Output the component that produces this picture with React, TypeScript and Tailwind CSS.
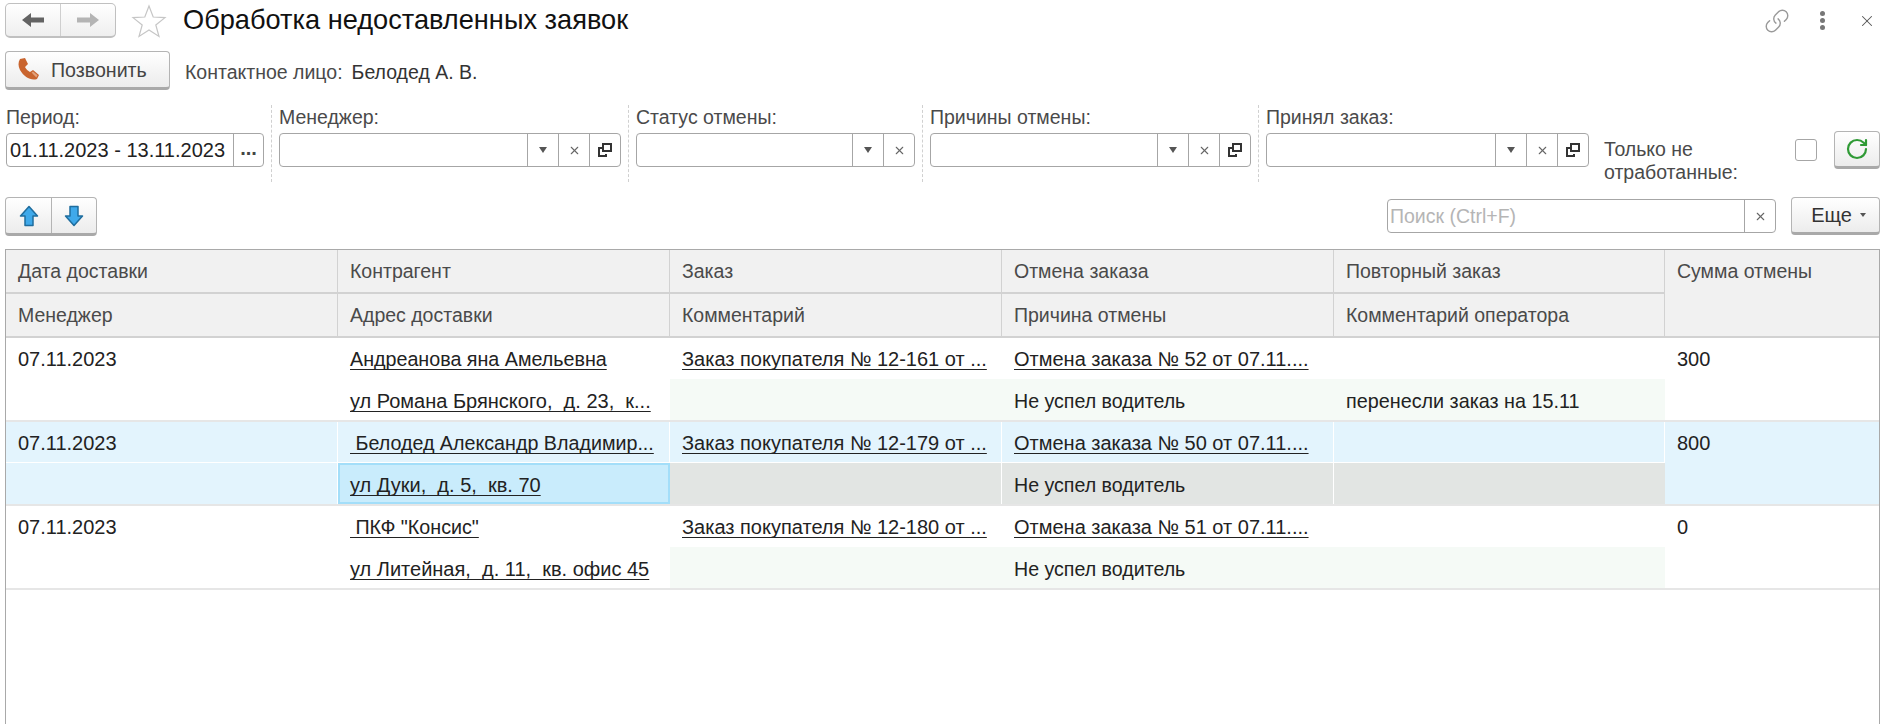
import { Link, RotateCw, X } from "lucide-react";

const FONT = "font-['Liberation_Sans',Arial,sans-serif]";
const LINK = "underline decoration-[1px] underline-offset-[3px] [text-decoration-skip-ink:none]";

function CopyIcon() {
  return (
    <svg width="16" height="16" viewBox="0 0 16 16" fill="none" stroke="#333" strokeWidth="2">
      <rect x="6" y="2" width="8" height="7" />
      <path d="M5 6H2v8h7v-2" />
    </svg>
  );
}

function Arrow({ dir, color }: { dir: "left" | "right"; color: string }) {
  return (
    <svg width="22" height="16" viewBox="0 0 22 16" className={dir === "right" ? "rotate-180" : ""}>
      <path d="M0 8 L9 1 V5.5 H22 V10.5 H9 V15 Z" fill={color} />
    </svg>
  );
}

function BlueArrow({ down }: { down?: boolean }) {
  return (
    <svg width="20" height="22" viewBox="0 0 20 22" className={down ? "rotate-180" : ""}>
      <path d="M10 1.5 L18.5 11 H14 V20.5 H6 V11 H1.5 Z" fill="#3fa9ea" stroke="#1f6d9e" strokeWidth="1.5" strokeLinejoin="round" />
    </svg>
  );
}

function PhoneIcon() {
  return (
    <svg width="25" height="25" viewBox="0 0 25 25">
      <path d="M4 2 L9 1 L12 7 L9 10 C10 12 12 14 14 15 L17 13 L23 18 L21 22 C15 24 8 20 4 13 C2 9 2 5 4 2 Z" fill="#c9652f" />
      <path d="M15.5 15.5 L17 14.5 L21.5 18.3 L20.3 20.5 Z" fill="#e2a27c" />
    </svg>
  );
}

function Field({ w, arrow = true, clear = true, copy = true }: { w: string; arrow?: boolean; clear?: boolean; copy?: boolean }) {
  return (
    <div className={`flex h-[34px] rounded-[4px] border border-[#a6a6a6] bg-white ${w}`}>
      <div className="flex-1" />
      {arrow && (
        <div className="flex w-[31px] items-center justify-center border-l border-[#a6a6a6]">
          <div className="h-0 w-0 border-x-[4px] border-t-[6px] border-x-transparent border-t-[#555]" />
        </div>
      )}
      {clear && (
        <div className="flex w-[31px] items-center justify-center border-l border-[#a6a6a6]">
          <X size={13} color="#666" strokeWidth={2} />
        </div>
      )}
      {copy && (
        <div className="flex w-[31px] items-center justify-center border-l border-[#a6a6a6]">
          <CopyIcon />
        </div>
      )}
    </div>
  );
}

function Sep() {
  return <div className="mx-[7px] h-[77px] w-0 border-l border-dashed border-[#d0d0d0]" />;
}

function Filter({ label, children }: { label: string; children: React.ReactNode }) {
  return (
    <div className="flex flex-col">
      <div className="h-[28px] text-[19.5px] leading-[25px] text-[#4a4a4a]">{label}</div>
      {children}
    </div>
  );
}

const btn = "rounded-[4px] border border-[#b4b4b4] border-b-[3px] border-b-[#a9a9a9] bg-linear-to-b from-white to-[#ececec]";

type Row = {
  date: string;
  client: string;
  address: string;
  order: string;
  cancel: string;
  reason: string;
  comment: string;
  sum: string;
};

const rows: Row[] = [
  {
    date: "07.11.2023",
    client: "Андреанова яна Амельевна",
    address: "ул Романа Брянского,  д. 23,  к...",
    order: "Заказ покупателя № 12-161 от ...",
    cancel: "Отмена заказа № 52 от 07.11....",
    reason: "Не успел водитель",
    comment: "перенесли заказ на 15.11",
    sum: "300",
  },
  {
    date: "07.11.2023",
    client: " Белодед Александр Владимир...",
    address: "ул Дуки,  д. 5,  кв. 70",
    order: "Заказ покупателя № 12-179 от ...",
    cancel: "Отмена заказа № 50 от 07.11....",
    reason: "Не успел водитель",
    comment: "",
    sum: "800",
  },
  {
    date: "07.11.2023",
    client: " ПКФ \"Консис\"",
    address: "ул Литейная,  д. 11,  кв. офис 45",
    order: "Заказ покупателя № 12-180 от ...",
    cancel: "Отмена заказа № 51 от 07.11....",
    reason: "Не успел водитель",
    comment: "",
    sum: "0",
  },
];

const cols = "grid grid-cols-[332px_332px_332px_332px_331px_1fr]";

function HeadCell({ text }: { text: string }) {
  return <div className="border-r border-b-2 border-[#d2d2d2] pl-[12px] pt-[8px] text-[19.5px] text-[#4a4a4a]">{text}</div>;
}

function DataRow({ row, active }: { row: Row; active: boolean }) {
  const top = active ? "bg-[#e3f4fd]" : "bg-white";
  const bottom = active ? "bg-[#e2e5e3]" : "bg-[#f5faf6]";
  const divider = active ? "border-r border-white" : "";
  const rowLine = active ? "border-b border-white" : "";
  return (
    <div className={`${cols} grid-rows-[41px_41px] border-b-2 border-[#e6e6e6] ${top} text-[#222] whitespace-pre`}>
      <div className={`${divider} ${rowLine} pl-[12px] pt-[8px]`}>{row.date}</div>
      <div className={`${divider} ${rowLine} pl-[12px] pt-[8px] text-[19.7px]`}><span className={LINK}>{row.client}</span></div>
      <div className={`${divider} ${rowLine} pl-[12px] pt-[8px]`}><span className={LINK}>{row.order}</span></div>
      <div className={`${divider} ${rowLine} pl-[12px] pt-[8px]`}><span className={LINK}>{row.cancel}</span></div>
      <div className={`${divider} ${rowLine}`} />
      <div className="row-span-2 pl-[12px] pt-[8px]">{row.sum}</div>
      <div className={`${top} ${divider}`} />
      {active ? (
        <div className="border-2 border-[#a3def9] bg-[#c9ecfc] pl-[10px] pt-[7px]"><span className={LINK}>{row.address}</span></div>
      ) : (
        <div className="pl-[12px] pt-[9px]"><span className={LINK}>{row.address}</span></div>
      )}
      <div className={`${bottom} ${divider}`} />
      <div className={`${bottom} ${divider} pl-[12px] pt-[9px] text-[19.6px]`}>{row.reason}</div>
      <div className={`${bottom} pl-[12px] pt-[9px] text-[19.8px]`}>{row.comment}</div>
    </div>
  );
}

export default function App() {
  return (
    <div className={`${FONT} flex h-[724px] w-[1890px] flex-col overflow-hidden bg-white text-[20px] leading-[26px]`}>
      {/* title bar */}
      <div className="flex h-[38px] items-center pt-[3px] pl-[5px] pr-[14px]">
        <div className="flex h-[35px] w-[111px] rounded-[5px] border border-[#c0c0c0] border-b-2 bg-linear-to-b from-white to-[#efefef]">
          <div className="flex w-[55px] items-center justify-center border-r border-[#cfcfcf]">
            <Arrow dir="left" color="#636363" />
          </div>
          <div className="flex flex-1 items-center justify-center">
            <Arrow dir="right" color="#b4b4b4" />
          </div>
        </div>
        <svg width="36" height="34" viewBox="0 0 36 34" className="ml-[15px]" fill="none">
          <path d="M18 2 L22.2 13 L34 13.6 L24.8 21 L28 32.5 L18 26 L8 32.5 L11.2 21 L2 13.6 L13.8 13 Z" stroke="#c6c6c6" strokeWidth="1.2" />
        </svg>
        <div className="ml-[16px] flex-1 pb-[2px] text-[27.2px] leading-[34px] text-[#111]">Обработка недоставленных заявок</div>
        <Link size={26} color="#9a9a9a" strokeWidth={1.3} className="-scale-x-100 rotate-90" />
        <div className="ml-[30px] flex flex-col gap-[2px]">
          <div className="h-[5px] w-[5px] rounded-full bg-[#777]" />
          <div className="h-[5px] w-[5px] rounded-full bg-[#777]" />
          <div className="h-[5px] w-[5px] rounded-full bg-[#777]" />
        </div>
        <X size={18} color="#555" strokeWidth={1.4} className="ml-[33px]" />
      </div>

      {/* call */}
      <div className="mt-[13px] flex h-[39px] items-start pl-[5px]">
        <div className={`${btn} flex h-[39px] w-[165px] items-center pl-[10px] text-[19.6px] text-[#444]`}>
          <PhoneIcon />
          <span className="ml-[10px]">Позвонить</span>
        </div>
        <div className="ml-[15px] mt-[8px] text-[19.5px] text-[#4a4a4a]">Контактное лицо:</div>
        <div className="ml-[9px] mt-[8px] text-[19.5px] text-[#333]">Белодед А. В.</div>
      </div>

      {/* filters */}
      <div className="mt-[15px] flex h-[77px] items-start pl-[6px]">
        <Filter label="Период:">
          <div className="flex h-[34px] w-[258px] rounded-[4px] border border-[#a6a6a6]">
            <div className="flex w-[226px] items-center pl-[3px] text-[#222]">01.11.2023 - 13.11.2023</div>
            <div className="flex flex-1 items-center justify-center border-l border-[#a6a6a6] pb-[4px] font-bold text-[#444]">...</div>
          </div>
        </Filter>
        <Sep />
        <Filter label="Менеджер:"><Field w="w-[342px]" /></Filter>
        <Sep />
        <Filter label="Статус отмены:"><Field w="w-[279px]" copy={false} /></Filter>
        <Sep />
        <Filter label="Причины отмены:"><Field w="w-[321px]" /></Filter>
        <Sep />
        <Filter label="Принял заказ:"><Field w="w-[323px]" /></Filter>
        <div className="ml-[15px] mt-[33px] w-[170px] text-[19.5px] leading-[23px] text-[#4a4a4a]">Только не отработанные:</div>
        <div className="ml-[21px] mt-[34px] h-[22px] w-[22px] rounded-[3px] border border-[#a6a6a6]" />
        <div className={`${btn} ml-[17px] mt-[26px] flex h-[38px] w-[46px] items-center justify-center`}>
          <RotateCw size={24} color="#2f9a35" strokeWidth={2.2} />
        </div>
      </div>

      {/* toolbar */}
      <div className="mt-[15px] flex h-[39px] items-start pl-[5px] pr-[10px]">
        <div className={`${btn} flex h-[39px] w-[92px]`}>
          <div className="flex w-[46px] items-center justify-center border-r border-[#b4b4b4]"><BlueArrow /></div>
          <div className="flex flex-1 items-center justify-center"><BlueArrow down /></div>
        </div>
        <div className="ml-auto mt-[2px] flex h-[34px] w-[389px] rounded-[4px] border border-[#a6a6a6]">
          <div className="flex flex-1 items-center pl-[2px] text-[19.5px] text-[#b5b5b5]">Поиск (Ctrl+F)</div>
          <div className="flex w-[31px] items-center justify-center border-l border-[#a6a6a6]"><X size={13} color="#666" strokeWidth={2} /></div>
        </div>
        <div className={`${btn} ml-[15px] flex h-[38px] w-[89px] items-center justify-center gap-[8px] pl-[6px] text-[#333]`}>
          Еще
          <div className="h-0 w-0 border-x-[3px] border-t-[4px] border-x-transparent border-t-[#555]" />
        </div>
      </div>

      {/* table */}
      <div className="ml-[5px] mr-[10px] mt-[13px] flex-1 border-x border-t border-[#a9a9a9]">
        <div className={`${cols} grid-rows-[44px_44px] bg-[#f1f1f1]`}>
          <HeadCell text="Дата доставки" />
          <HeadCell text="Контрагент" />
          <HeadCell text="Заказ" />
          <HeadCell text="Отмена заказа" />
          <HeadCell text="Повторный заказ" />
          <div className="row-span-2 border-b-2 border-[#d2d2d2] pl-[12px] pt-[8px] text-[19.5px] text-[#4a4a4a]">Сумма отмены</div>
          <HeadCell text="Менеджер" />
          <HeadCell text="Адрес доставки" />
          <HeadCell text="Комментарий" />
          <HeadCell text="Причина отмены" />
          <HeadCell text="Комментарий оператора" />
        </div>
        {rows.map((row, i) => (
          <DataRow key={i} row={row} active={i === 1} />
        ))}
      </div>
    </div>
  );
}
